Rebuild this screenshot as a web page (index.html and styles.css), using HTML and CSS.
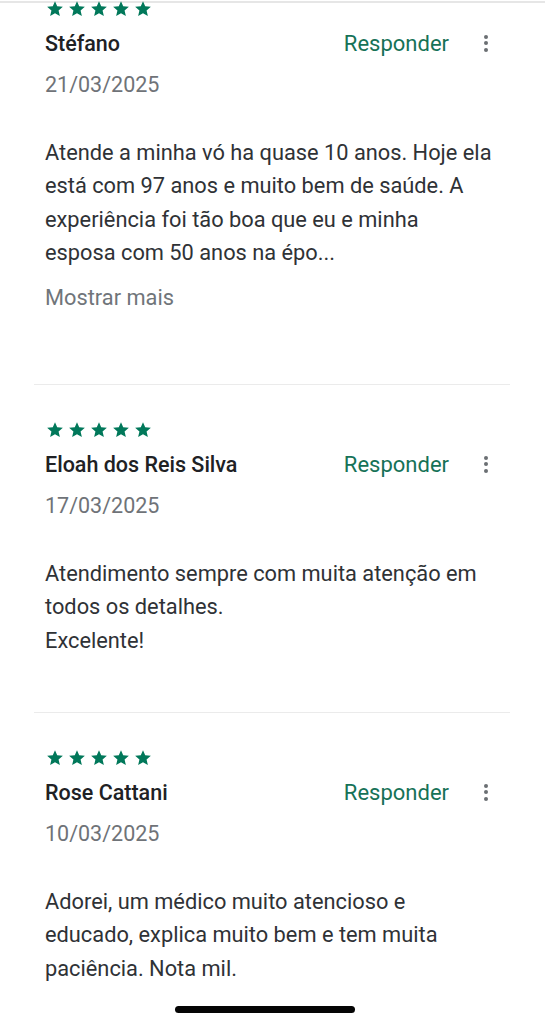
FILE: index.html
```html
<!DOCTYPE html>
<html lang="pt">
<head>
<meta charset="utf-8">
<link rel="stylesheet" href="styles.css">
</head>
<body>
<div class="topline"></div>
<main class="list">
  <section class="review first">
    <div class="stars">
      <svg viewBox="0 0 24 24"><path d="M12 17.27L18.18 21l-1.64-7.03L22 9.24l-7.19-.61L12 2 9.19 8.63 2 9.24l5.46 4.73L5.82 21z"/></svg>
      <svg viewBox="0 0 24 24"><path d="M12 17.27L18.18 21l-1.64-7.03L22 9.24l-7.19-.61L12 2 9.19 8.63 2 9.24l5.46 4.73L5.82 21z"/></svg>
      <svg viewBox="0 0 24 24"><path d="M12 17.27L18.18 21l-1.64-7.03L22 9.24l-7.19-.61L12 2 9.19 8.63 2 9.24l5.46 4.73L5.82 21z"/></svg>
      <svg viewBox="0 0 24 24"><path d="M12 17.27L18.18 21l-1.64-7.03L22 9.24l-7.19-.61L12 2 9.19 8.63 2 9.24l5.46 4.73L5.82 21z"/></svg>
      <svg viewBox="0 0 24 24"><path d="M12 17.27L18.18 21l-1.64-7.03L22 9.24l-7.19-.61L12 2 9.19 8.63 2 9.24l5.46 4.73L5.82 21z"/></svg>
    </div>
    <div class="head">
      <span class="name">Stéfano</span>
      <span class="reply">Responder</span>
      <span class="dots"><i></i><i></i><i></i></span>
    </div>
    <div class="date">21/03/2025</div>
    <p class="text">Atende a minha vó ha quase 10 anos. Hoje ela<br>está com 97 anos e muito bem de saúde. A<br>experiência foi tão boa que eu e minha<br>esposa com 50 anos na épo...</p>
    <div class="more">Mostrar mais</div>
  </section>
  <hr class="divider">
  <section class="review">
    <div class="stars">
      <svg viewBox="0 0 24 24"><path d="M12 17.27L18.18 21l-1.64-7.03L22 9.24l-7.19-.61L12 2 9.19 8.63 2 9.24l5.46 4.73L5.82 21z"/></svg>
      <svg viewBox="0 0 24 24"><path d="M12 17.27L18.18 21l-1.64-7.03L22 9.24l-7.19-.61L12 2 9.19 8.63 2 9.24l5.46 4.73L5.82 21z"/></svg>
      <svg viewBox="0 0 24 24"><path d="M12 17.27L18.18 21l-1.64-7.03L22 9.24l-7.19-.61L12 2 9.19 8.63 2 9.24l5.46 4.73L5.82 21z"/></svg>
      <svg viewBox="0 0 24 24"><path d="M12 17.27L18.18 21l-1.64-7.03L22 9.24l-7.19-.61L12 2 9.19 8.63 2 9.24l5.46 4.73L5.82 21z"/></svg>
      <svg viewBox="0 0 24 24"><path d="M12 17.27L18.18 21l-1.64-7.03L22 9.24l-7.19-.61L12 2 9.19 8.63 2 9.24l5.46 4.73L5.82 21z"/></svg>
    </div>
    <div class="head">
      <span class="name">Eloah dos Reis Silva</span>
      <span class="reply">Responder</span>
      <span class="dots"><i></i><i></i><i></i></span>
    </div>
    <div class="date">17/03/2025</div>
    <p class="text">Atendimento sempre com muita atenção em<br>todos os detalhes.<br>Excelente!</p>
  </section>
  <hr class="divider">
  <section class="review">
    <div class="stars">
      <svg viewBox="0 0 24 24"><path d="M12 17.27L18.18 21l-1.64-7.03L22 9.24l-7.19-.61L12 2 9.19 8.63 2 9.24l5.46 4.73L5.82 21z"/></svg>
      <svg viewBox="0 0 24 24"><path d="M12 17.27L18.18 21l-1.64-7.03L22 9.24l-7.19-.61L12 2 9.19 8.63 2 9.24l5.46 4.73L5.82 21z"/></svg>
      <svg viewBox="0 0 24 24"><path d="M12 17.27L18.18 21l-1.64-7.03L22 9.24l-7.19-.61L12 2 9.19 8.63 2 9.24l5.46 4.73L5.82 21z"/></svg>
      <svg viewBox="0 0 24 24"><path d="M12 17.27L18.18 21l-1.64-7.03L22 9.24l-7.19-.61L12 2 9.19 8.63 2 9.24l5.46 4.73L5.82 21z"/></svg>
      <svg viewBox="0 0 24 24"><path d="M12 17.27L18.18 21l-1.64-7.03L22 9.24l-7.19-.61L12 2 9.19 8.63 2 9.24l5.46 4.73L5.82 21z"/></svg>
    </div>
    <div class="head">
      <span class="name">Rose Cattani</span>
      <span class="reply">Responder</span>
      <span class="dots"><i></i><i></i><i></i></span>
    </div>
    <div class="date">10/03/2025</div>
    <p class="text">Adorei, um médico muito atencioso e<br>educado, explica muito bem e tem muita<br>paciência. Nota mil.</p>
  </section>
</main>
<div class="homebar"></div>
</body>
</html>
```

FILE: styles.css
```css
* { box-sizing: border-box; }
html, body {
  margin: 0;
  padding: 0;
  background: #ffffff;
}
body {
  width: 545px;
  height: 1024px;
  overflow: hidden;
  position: relative;
  font-family: Roboto, "Noto Sans", "Liberation Sans", sans-serif;
  -webkit-font-smoothing: antialiased;
}
.topline {
  height: 2px;
  margin-top: 1px;
  background: #e6e6e6;
}
.list {
  display: flex;
  flex-direction: column;
}
.review {
  padding: 0 25px 0 45px;
  display: flex;
  flex-direction: column;
}
.review.first {
  margin-top: -2px;
}
.stars {
  display: flex;
  gap: 6px;
  height: 16px;
  padding-left: 2px;
}
.stars svg {
  width: 16px;
  height: 16px;
  fill: #01785a;
  transform: scale(1.18);
}
.head {
  display: flex;
  align-items: center;
  height: 24px;
  margin-top: 14px;
}
.name {
  flex: 1;
  font-size: 21.5px;
  font-weight: 500;
  color: #202124;
}
.reply {
  font-size: 22px;
  color: #167257;
}
.dots {
  display: flex;
  flex-direction: column;
  align-items: center;
  gap: 2.5px;
  width: 14px;
  margin-left: 30px;
  margin-right: 27px;
}
.dots i {
  display: block;
  width: 4px;
  height: 4px;
  border-radius: 50%;
  background: #6b6f73;
}
.date {
  margin-top: 18px;
  font-size: 21.5px;
  line-height: 24px;
  color: #6f7378;
}
.text {
  margin: 39px 0 0;
  font-size: 21.8px;
  line-height: 33.3px;
  color: #2f3236;
}
.more {
  margin-top: 17px;
  font-size: 21.8px;
  line-height: 24px;
  color: #70757a;
}
.divider {
  border: 0;
  height: 1px;
  background: #ebebeb;
  margin: 0 35px 0 34px;
}
.review.first + .divider { margin-top: 74px; }
.review + .divider { margin-bottom: 37px; }
.review:not(.first) + .divider { margin-top: 55px; }
.homebar {
  position: absolute;
  left: 175px;
  top: 1006px;
  width: 180px;
  height: 7px;
  border-radius: 4px;
  background: #050505;
}
```
